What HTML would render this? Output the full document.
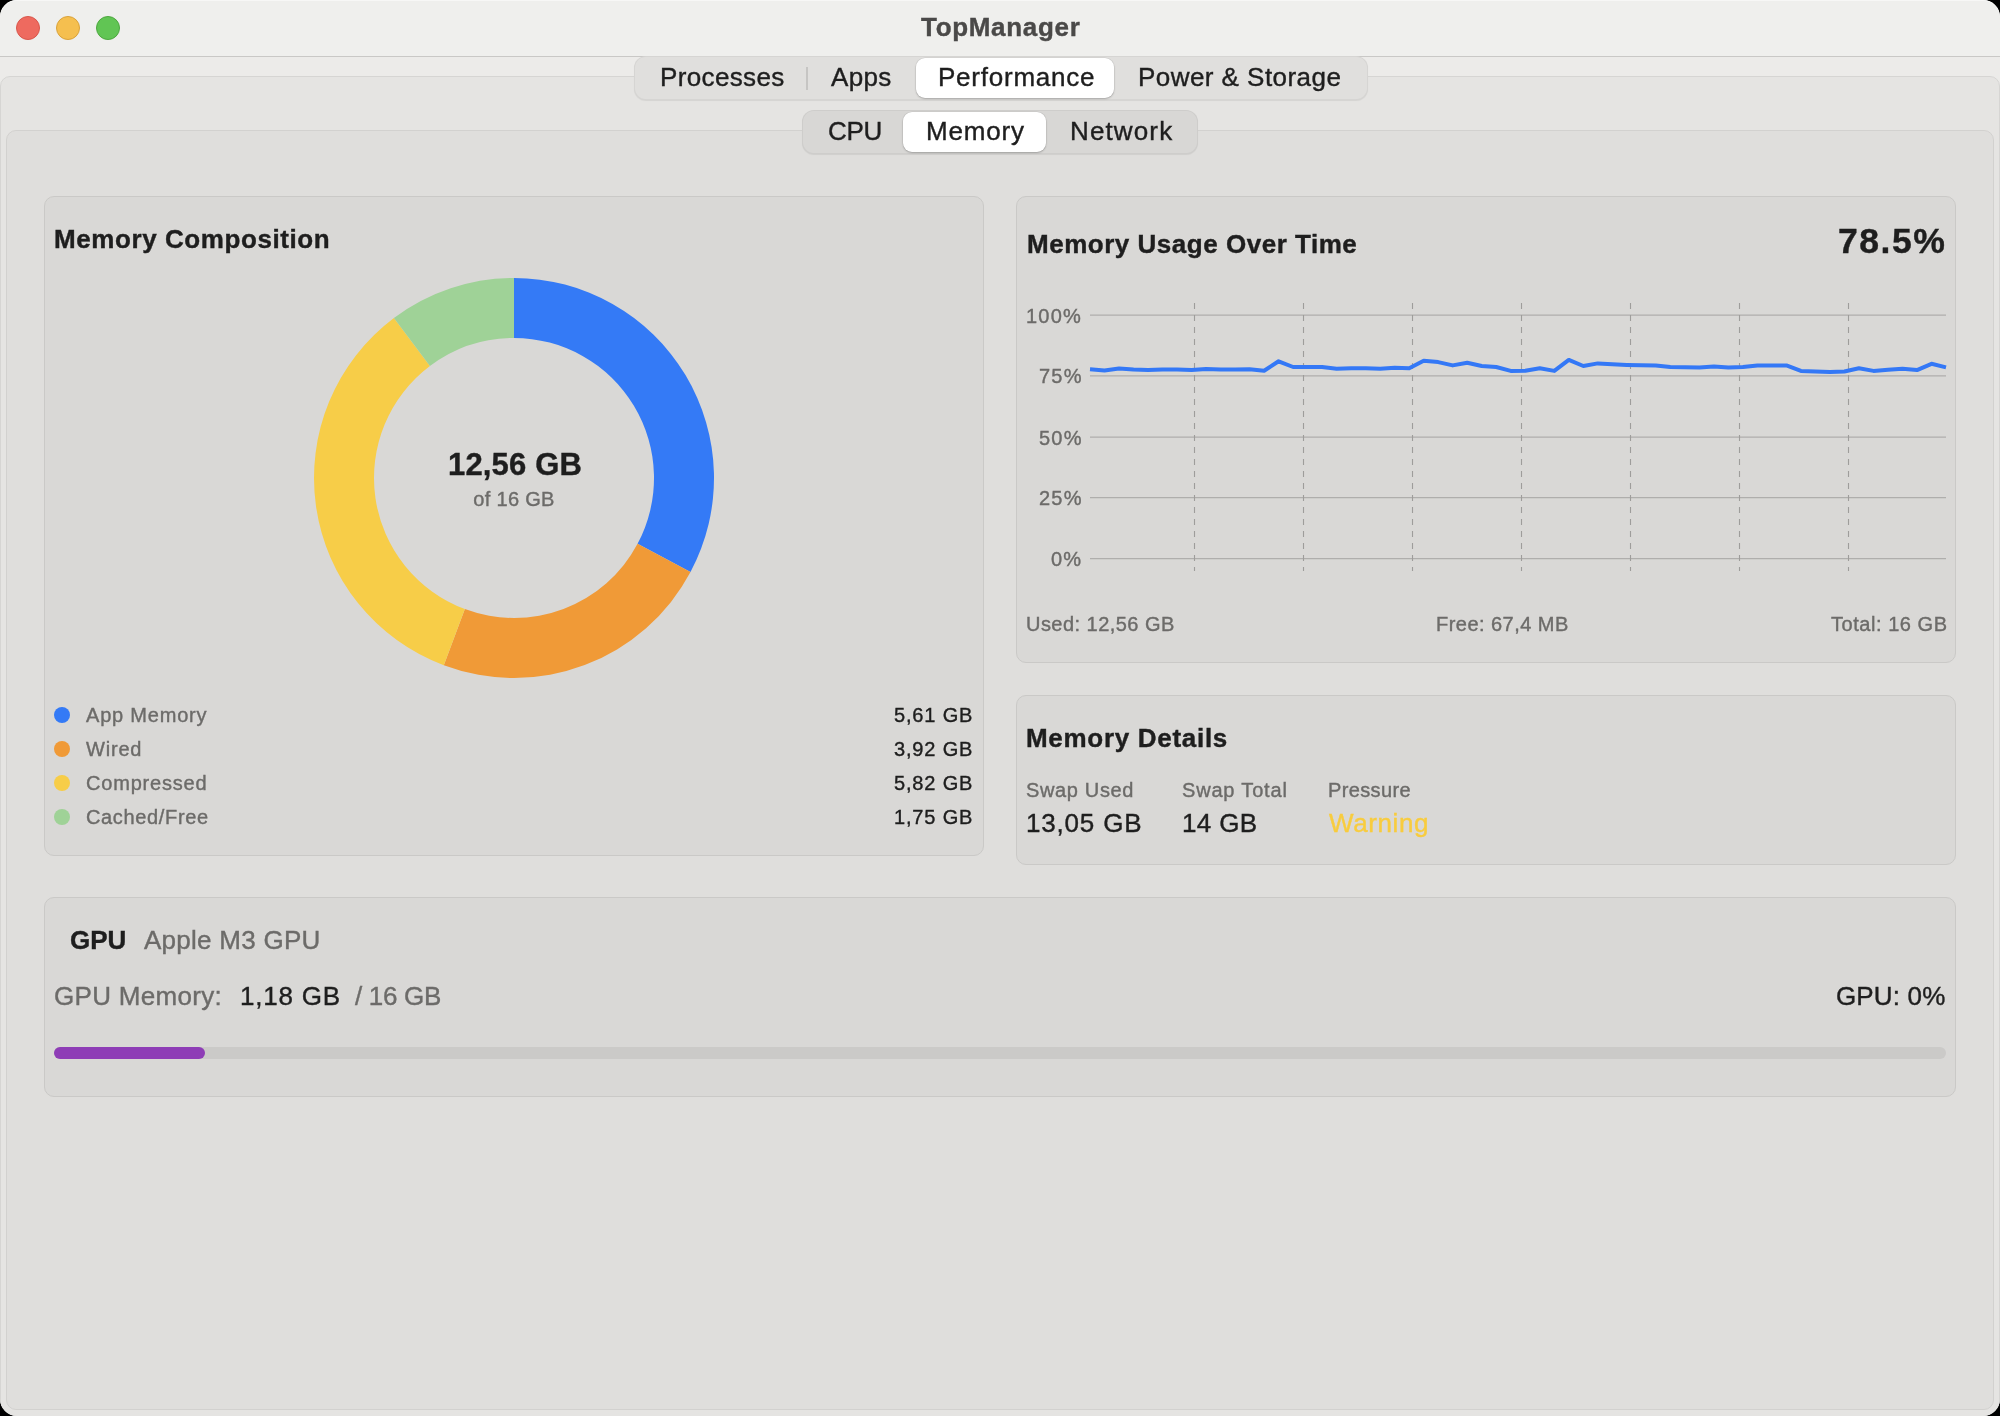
<!DOCTYPE html>
<html><head><meta charset="utf-8"><title>TopManager</title>
<style>
*{box-sizing:border-box;margin:0;padding:0}
html,body{width:2000px;height:1416px;background:#000;overflow:hidden}
body{font-family:"Liberation Sans",sans-serif;position:relative}
.win{position:absolute;left:0;top:0;width:2000px;height:1416px;border-radius:17px;overflow:hidden;background:#ECEBE9}
.title{position:absolute;left:0;top:0;width:2000px;height:57px;background:#EFEFED;border-bottom:1px solid #C9C8C6}
.tl{position:absolute;top:16px;width:24px;height:24px;border-radius:50%}
.abs{position:absolute}
.t{position:absolute;white-space:nowrap;line-height:1;will-change:transform;-webkit-text-stroke-width:0.4px}
.outer{position:absolute;left:0;top:76px;width:2000px;height:1360px;background:#E5E4E2;border:1px solid #D6D5D3;border-radius:10px}
.inner{position:absolute;left:6px;top:130px;width:1988px;height:1280px;background:#DFDEDC;border:1px solid #D2D1CF;border-radius:10px}
.card{position:absolute;background:#D9D8D6;border:1px solid #CAC9C7;border-radius:10px}
.seg{position:absolute;background:#E0DFDD;border:1px solid rgba(0,0,0,0.045);border-radius:12px;box-shadow:0 1px 1px rgba(0,0,0,0.07)}
.sel{position:absolute;background:#FFFFFF;border-radius:9px;box-shadow:0 1px 2px rgba(0,0,0,0.22),0 0 0 0.5px rgba(0,0,0,0.08)}
.pri{color:#1E1E1E}
.sec{color:#6C6B69}
</style></head>
<body>
<div class="win">
<div class="title"></div>
<div class="tl" style="left:16px;background:#EE6A5F;border:1px solid #D8574C"></div>
<div class="tl" style="left:56px;background:#F5BF4F;border:1px solid #D9A23B"></div>
<div class="tl" style="left:96px;background:#61C554;border:1px solid #4DA73F"></div>
<div class="t pri" style="left:921px;top:13.99px;font-size:26px;font-weight:700;letter-spacing:0.68px;color:#4A4948">TopManager</div>
<div class="outer"></div>
<div class="inner"></div>
<div class="seg" style="left:634px;top:56px;width:734px;height:43.5px"></div>
<div class="sel" style="left:916px;top:58px;width:198px;height:40px"></div>
<div class="abs" style="left:806px;top:67px;width:2px;height:23px;background:#C6C5C3"></div>
<div class="t pri" style="left:660px;top:63.99px;font-size:26px;font-weight:400;letter-spacing:0.36px;">Processes</div>
<div class="t pri" style="left:831px;top:63.99px;font-size:26px;font-weight:400;letter-spacing:0.33px;">Apps</div>
<div class="t pri" style="left:938px;top:63.99px;font-size:26px;font-weight:400;letter-spacing:0.77px;">Performance</div>
<div class="t pri" style="left:1138px;top:63.99px;font-size:26px;font-weight:400;letter-spacing:0.45px;">Power &amp; Storage</div>
<div class="seg" style="left:802px;top:110px;width:396px;height:44px;background:#D8D7D5"></div>
<div class="sel" style="left:903px;top:112px;width:143px;height:40px"></div>
<div class="t pri" style="left:828px;top:117.99px;font-size:26px;font-weight:400;letter-spacing:-0.3px;">CPU</div>
<div class="t pri" style="left:926px;top:117.99px;font-size:26px;font-weight:400;letter-spacing:0.8px;">Memory</div>
<div class="t pri" style="left:1069.5px;top:117.99px;font-size:26px;font-weight:400;letter-spacing:1.13px;">Network</div>
<div class="card" style="left:44px;top:196px;width:940px;height:660px"></div>
<div class="card" style="left:1016px;top:196px;width:940px;height:467px"></div>
<div class="card" style="left:1016px;top:695px;width:940px;height:170px"></div>
<div class="card" style="left:44px;top:897px;width:1912px;height:200px"></div>
<svg class="abs" style="left:0;top:0" width="2000" height="1416" viewBox="0 0 2000 1416">
<path d="M514.00,278.00 A200,200 0 0 1 690.51,572.05 L637.56,543.83 A140,140 0 0 0 514.00,338.00 Z" fill="#347AF6"/>
<path d="M690.51,572.05 A200,200 0 0 1 443.80,665.27 L464.86,609.09 A140,140 0 0 0 637.56,543.83 Z" fill="#F09A37"/>
<path d="M443.80,665.27 A200,200 0 0 1 393.92,318.06 L429.94,366.04 A140,140 0 0 0 464.86,609.09 Z" fill="#F7CD48"/>
<path d="M393.92,318.06 A200,200 0 0 1 514.00,278.00 L514.00,338.00 A140,140 0 0 0 429.94,366.04 Z" fill="#9FD297"/>
<line x1="1090" y1="315.2" x2="1946" y2="315.2" stroke="#AFAEAC" stroke-width="1.3"/>
<line x1="1090" y1="375.8" x2="1946" y2="375.8" stroke="#AFAEAC" stroke-width="1.3"/>
<line x1="1090" y1="437.1" x2="1946" y2="437.1" stroke="#AFAEAC" stroke-width="1.3"/>
<line x1="1090" y1="497.7" x2="1946" y2="497.7" stroke="#AFAEAC" stroke-width="1.3"/>
<line x1="1090" y1="558.6" x2="1946" y2="558.6" stroke="#AFAEAC" stroke-width="1.3"/>
<line x1="1194.5" y1="303" x2="1194.5" y2="571" stroke="#9E9D9B" stroke-width="1.1" stroke-dasharray="6 6"/>
<line x1="1303.5" y1="303" x2="1303.5" y2="571" stroke="#9E9D9B" stroke-width="1.1" stroke-dasharray="6 6"/>
<line x1="1412.5" y1="303" x2="1412.5" y2="571" stroke="#9E9D9B" stroke-width="1.1" stroke-dasharray="6 6"/>
<line x1="1521.5" y1="303" x2="1521.5" y2="571" stroke="#9E9D9B" stroke-width="1.1" stroke-dasharray="6 6"/>
<line x1="1630.5" y1="303" x2="1630.5" y2="571" stroke="#9E9D9B" stroke-width="1.1" stroke-dasharray="6 6"/>
<line x1="1739.5" y1="303" x2="1739.5" y2="571" stroke="#9E9D9B" stroke-width="1.1" stroke-dasharray="6 6"/>
<line x1="1848.5" y1="303" x2="1848.5" y2="571" stroke="#9E9D9B" stroke-width="1.1" stroke-dasharray="6 6"/>
<polyline points="1090.0,369.3 1104.5,370.4 1119.0,368.5 1133.5,369.6 1148.0,370.1 1162.5,369.6 1177.1,369.6 1191.6,370.1 1206.1,368.9 1220.6,369.6 1235.1,369.6 1249.6,369.3 1264.1,370.7 1278.6,361.3 1293.1,367.0 1307.6,367.0 1322.1,367.0 1336.6,368.7 1351.2,368.3 1365.7,368.2 1380.2,368.7 1394.7,367.8 1409.2,368.2 1423.7,360.8 1438.2,362.1 1452.7,365.4 1467.2,362.7 1481.7,366.0 1496.2,367.0 1510.7,370.9 1525.3,370.7 1539.8,368.2 1554.3,370.9 1568.8,359.9 1583.3,366.0 1597.8,363.4 1612.3,364.3 1626.8,364.9 1641.3,365.2 1655.8,365.4 1670.3,367.0 1684.8,367.2 1699.4,367.4 1713.9,366.5 1728.4,367.6 1742.9,367.0 1757.4,365.4 1771.9,365.4 1786.4,365.4 1800.9,370.9 1815.4,371.5 1829.9,372.0 1844.4,371.5 1858.9,368.2 1873.5,370.9 1888.0,369.8 1902.5,368.7 1917.0,370.1 1931.5,363.8 1946.0,367.4" fill="none" stroke="#3478F6" stroke-width="4" stroke-linejoin="round" stroke-linecap="butt"/>
</svg>
<div class="t pri" style="left:54px;top:225.99px;font-size:26px;font-weight:700;letter-spacing:0.58px;">Memory Composition</div>
<div class="t pri" style="left:214.575px;width:600px;text-align:center;top:448.86px;font-size:31px;font-weight:700;letter-spacing:0.15px;">12,56 GB</div>
<div class="t sec" style="left:213.94999999999996px;width:600px;text-align:center;top:489.07px;font-size:20px;font-weight:400;letter-spacing:0.3px;">of 16 GB</div>
<div class="abs" style="left:54px;top:707px;width:16px;height:16px;border-radius:50%;background:#347AF6"></div>
<div class="t sec" style="left:85.8px;top:704.97px;font-size:20px;font-weight:400;letter-spacing:0.8px;">App Memory</div>
<div class="t pri" style="right:1027.17px;top:704.97px;font-size:20px;font-weight:400;letter-spacing:0.83px;">5,61 GB</div>
<div class="abs" style="left:54px;top:741px;width:16px;height:16px;border-radius:50%;background:#F09A37"></div>
<div class="t sec" style="left:85.8px;top:738.97px;font-size:20px;font-weight:400;letter-spacing:0.8px;">Wired</div>
<div class="t pri" style="right:1027.17px;top:738.97px;font-size:20px;font-weight:400;letter-spacing:0.83px;">3,92 GB</div>
<div class="abs" style="left:54px;top:775px;width:16px;height:16px;border-radius:50%;background:#F7CD48"></div>
<div class="t sec" style="left:85.8px;top:772.97px;font-size:20px;font-weight:400;letter-spacing:0.8px;">Compressed</div>
<div class="t pri" style="right:1027.17px;top:772.97px;font-size:20px;font-weight:400;letter-spacing:0.83px;">5,82 GB</div>
<div class="abs" style="left:54px;top:809px;width:16px;height:16px;border-radius:50%;background:#9FD297"></div>
<div class="t sec" style="left:85.8px;top:806.97px;font-size:20px;font-weight:400;letter-spacing:0.65px;">Cached/Free</div>
<div class="t pri" style="right:1027.17px;top:806.97px;font-size:20px;font-weight:400;letter-spacing:0.83px;">1,75 GB</div>
<div class="t pri" style="left:1027px;top:230.79px;font-size:26px;font-weight:700;letter-spacing:0.52px;">Memory Usage Over Time</div>
<div class="t pri" style="right:54.0px;top:224.26px;font-size:35.6px;font-weight:700;letter-spacing:1.5px;">78.5%</div>
<div class="t sec" style="right:917.8px;top:305.77px;font-size:20px;font-weight:400;letter-spacing:1.2px;">100%</div>
<div class="t sec" style="right:917.8px;top:366.37px;font-size:20px;font-weight:400;letter-spacing:1.2px;">75%</div>
<div class="t sec" style="right:917.8px;top:427.67px;font-size:20px;font-weight:400;letter-spacing:1.2px;">50%</div>
<div class="t sec" style="right:917.8px;top:488.27px;font-size:20px;font-weight:400;letter-spacing:1.2px;">25%</div>
<div class="t sec" style="right:917.8px;top:549.17px;font-size:20px;font-weight:400;letter-spacing:1.2px;">0%</div>
<div class="t sec" style="left:1026px;top:614.07px;font-size:20px;font-weight:400;letter-spacing:0.46px;">Used: 12,56 GB</div>
<div class="t sec" style="left:1435.5px;top:614.07px;font-size:20px;font-weight:400;letter-spacing:0.46px;">Free: 67,4 MB</div>
<div class="t sec" style="right:52.96px;top:614.07px;font-size:20px;font-weight:400;letter-spacing:0.54px;">Total: 16 GB</div>
<div class="t pri" style="left:1026px;top:725.19px;font-size:26px;font-weight:700;letter-spacing:0.7px;">Memory Details</div>
<div class="t sec" style="left:1026px;top:780.37px;font-size:20px;font-weight:400;letter-spacing:0.65px;">Swap Used</div>
<div class="t sec" style="left:1182px;top:780.37px;font-size:20px;font-weight:400;letter-spacing:0.82px;">Swap Total</div>
<div class="t sec" style="left:1328px;top:780.37px;font-size:20px;font-weight:400;letter-spacing:0.37px;">Pressure</div>
<div class="t pri" style="left:1026px;top:810.29px;font-size:26px;font-weight:400;letter-spacing:0.81px;">13,05 GB</div>
<div class="t pri" style="left:1182px;top:810.29px;font-size:26px;font-weight:400;letter-spacing:0.35px;">14 GB</div>
<div class="t " style="left:1329px;top:810.29px;font-size:26px;font-weight:400;letter-spacing:0.6px;color:#F8CC3E">Warning</div>
<div class="t pri" style="left:69.5px;top:926.89px;font-size:26px;font-weight:700;">GPU</div>
<div class="t sec" style="left:144px;top:926.89px;font-size:26px;font-weight:400;letter-spacing:0.26px;">Apple M3 GPU</div>
<div class="t sec" style="left:54px;top:983.39px;font-size:26px;font-weight:400;letter-spacing:0.3px;">GPU Memory:</div>
<div class="t pri" style="left:239.5px;top:983.39px;font-size:26px;font-weight:400;letter-spacing:0.8px;">1,18 GB</div>
<div class="t sec" style="left:355px;top:983.39px;font-size:26px;font-weight:400;letter-spacing:-0.3px;">/ 16 GB</div>
<div class="t pri" style="right:54.85px;top:982.79px;font-size:26px;font-weight:400;letter-spacing:0.15px;">GPU: 0%</div>
<div class="abs" style="left:54px;top:1047px;width:1892px;height:12px;border-radius:6px;background:#CBCAC8"></div>
<div class="abs" style="left:54px;top:1047px;width:151px;height:12px;border-radius:6px;background:#8E3DB6"></div>
<div class="abs" style="left:0;top:0;width:2000px;height:40px;border-radius:17px 17px 0 0;border-top:1.5px solid rgba(255,255,255,0.5)"></div>
</div>
</body></html>
